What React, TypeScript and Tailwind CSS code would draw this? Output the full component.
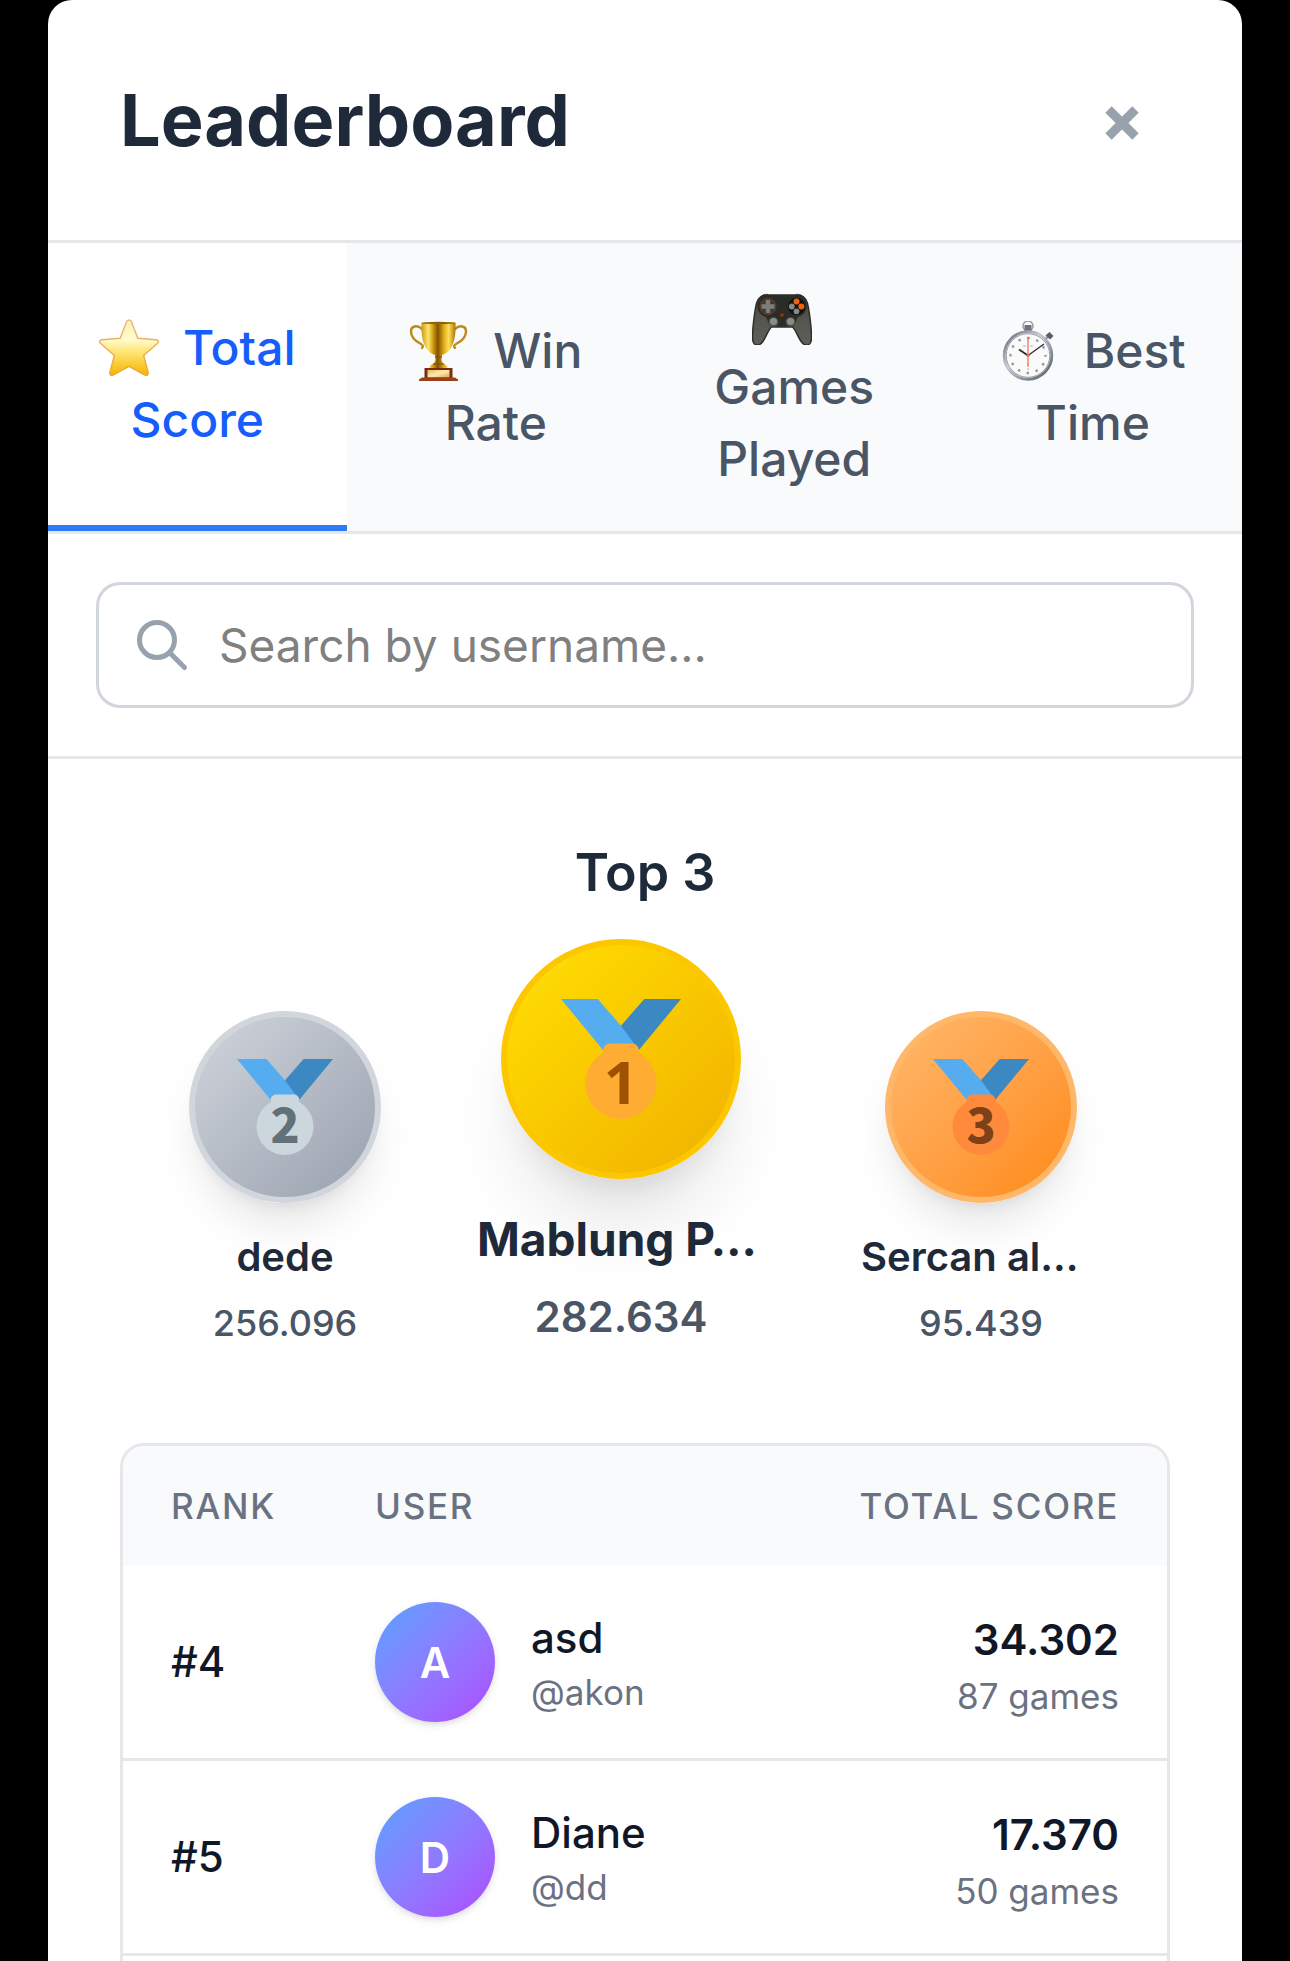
import React, { useState } from 'react';

type TabId = 'score' | 'winRate' | 'games' | 'time';

interface Tab {
  id: TabId;
  label: string;
  icon: React.FC;
}

interface PodiumEntry {
  place: 1 | 2 | 3;
  name: string;
  value: string;
}

interface Player {
  rank: number;
  name: string;
  username: string;
  score: string;
  games: number;
}

const StarIcon = () => (
  <svg viewBox="0 0 60 60" className="inline-block size-15 align-[-13px] mr-6" aria-hidden="true">
    <defs>
      <linearGradient id="star-fill" x1="0" y1="0" x2="0" y2="1">
        <stop offset="0" stopColor="#fff0b0" />
        <stop offset="0.35" stopColor="#fffbd0" />
        <stop offset="0.58" stopColor="#ffe473" />
        <stop offset="1" stopColor="#f7b500" />
      </linearGradient>
      <linearGradient id="star-edge" x1="0" y1="0" x2="0" y2="1">
        <stop offset="0" stopColor="#e6b877" />
        <stop offset="1" stopColor="#e9a92c" />
      </linearGradient>
    </defs>
    <path
      d="M27.600 3.500q2.400-3 4.800 0l6.400 16.800 18.400 1.500q3.400.8 1.400 3.600L44.600 37.500l4.600 17q.2 3.600-3.200 2.600L30 48.400l-16 8.700q-3.400 1-3.200-2.600l4.600-17L1.400 25.400q-2-2.800 1.400-3.600l18.400-1.500z"
      fill="url(#star-fill)"
      stroke="url(#star-edge)"
      strokeWidth="1.400"
    />
  </svg>
);

const TrophyIcon = () => (
  <svg viewBox="0 0 60 60" className="inline-block size-15 align-[-13px] mr-6" aria-hidden="true">
    <defs>
      <linearGradient id="trophy-cup" x1="0" y1="0" x2="1" y2="0">
        <stop offset="0" stopColor="#c79a12" />
        <stop offset="0.2" stopColor="#ffe56b" />
        <stop offset="0.36" stopColor="#c8920a" />
        <stop offset="0.48" stopColor="#805200" />
        <stop offset="0.66" stopColor="#e0ad1c" />
        <stop offset="0.8" stopColor="#ffdf5a" />
        <stop offset="1" stopColor="#a87404" />
      </linearGradient>
      <linearGradient id="trophy-plate" x1="0" y1="0" x2="1" y2="1">
        <stop offset="0" stopColor="#e8b95b" />
        <stop offset="0.5" stopColor="#ffeab0" />
        <stop offset="1" stopColor="#dfa848" />
      </linearGradient>
    </defs>
    <g fill="none" stroke="#b98a1c" strokeWidth="2.400" strokeLinecap="round">
      <path d="M13 8C8 3.500 2 5 2 10.500c0 6.500 5 10 10 12.500 2 1 2.500 2.500 1 4" />
      <path d="M46 8c5-4.500 11-3 11 2.500 0 6.500-5 10-10 12.500-2 1-2.500 2.500-1 4" />
    </g>
    <path
      d="M12.500 1.500h34c.5 12-1 22-6.500 28-3 3-5.500 4-7 4.500l-.5 5c.5 3 2 3.500 4.500 5 1 1 1.500 2 1.500 3.500h-18c0-1.500.5-2.500 1.500-3.500 2.500-1.500 4-2 4.500-5l-.5-5c-1.500-.5-4-1.500-7-4.500-5.500-6-7-16-6.500-28z"
      fill="url(#trophy-cup)"
    />
    <ellipse cx="29.500" cy="2" rx="17" ry="1.200" fill="#8f6207" />
    <path d="M26 36h7M24 43h11" stroke="#7a5203" strokeWidth="1.200" />
    <path d="M15.500 47h28v10h-28z" fill="#7a2d0c" />
    <path d="M18.500 49h22v7.500h-22z" fill="url(#trophy-plate)" />
    <path d="M13 56.500h33l3 2V60H10v-1.500z" fill="#98401a" />
  </svg>
);

const GamepadIcon = () => (
  <svg viewBox="0 0 60 60" className="inline-block size-15 align-[-13px] mr-6" aria-hidden="true">
    <defs>
      <linearGradient id="pad-body" x1="0" y1="0" x2="0" y2="1">
        <stop offset="0" stopColor="#43453f" />
        <stop offset="0.5" stopColor="#54564f" />
        <stop offset="1" stopColor="#5d5f58" />
      </linearGradient>
    </defs>
    <path d="M10 10.500l5-2 3 2zM50 10.500l-5-2-3 2z" fill="#8a8d84" />
    <path
      d="M12 10h36c5 1.500 7.500 6 8.500 13 1.500 9 3 20 3 30 0 8-6 9-10 4-3.500-4.500-5.500-12-9-15h-21c-3.500 3-5.500 10.500-9 15-4 5-10 4-10-4 0-10 1.500-21 3-30 1-7 3.500-11.500 8.500-13z"
      fill="url(#pad-body)"
      stroke="#2c2e2a"
      strokeWidth="1.500"
    />
    <path
      d="M13 10h34c6 2 9 9 7 15-1.500 4-5 6-8 7-2 4-3 9-7 9.500H21c-4-.5-5-5.500-7-9.500-3-1-6.500-3-8-7-2-6 1-13 7-15z"
      fill="#2a2c28"
    />
    <circle cx="16" cy="21.500" r="8" fill="#3a3c37" stroke="#7c3c1c" strokeWidth="0.900" />
    <path d="M13.800 15h4.400v4.300h4.300v4.400h-4.300V28h-4.400v-4.300H9.500v-4.400h4.300z" fill="#7d807a" />
    <circle cx="44.500" cy="21.500" r="8.500" fill="#11120f" />
    <circle cx="44.500" cy="16.500" r="3" fill="#f2600f" />
    <circle cx="49.300" cy="21.500" r="3" fill="#f2600f" />
    <circle cx="39.800" cy="21.500" r="2.900" fill="#85898a" />
    <circle cx="44.500" cy="26.300" r="2.900" fill="#85898a" />
    <circle cx="30" cy="30" r="1.900" fill="#8c3213" />
    <circle cx="21.500" cy="37" r="5" fill="#4a4d49" />
    <circle cx="21.500" cy="36.500" r="3.600" fill="#8a8d88" />
    <circle cx="38.500" cy="37" r="5" fill="#4a4d49" />
    <circle cx="38.500" cy="36.500" r="3.600" fill="#8a8d88" />
  </svg>
);

const StopwatchIcon = () => (
  <svg viewBox="0 0 60 60" className="inline-block size-15 align-[-13px] mr-6" aria-hidden="true">
    <defs>
      <linearGradient id="watch-rim" x1="0" y1="0" x2="1" y2="1">
        <stop offset="0" stopColor="#5c6470" />
        <stop offset="0.4" stopColor="#c5cad2" />
        <stop offset="0.7" stopColor="#8a919c" />
        <stop offset="1" stopColor="#4b525d" />
      </linearGradient>
    </defs>
    <circle cx="28" cy="5" r="5" fill="none" stroke="#9aa0aa" strokeWidth="1.600" />
    <path d="M24.500 4h7v6h-7z" fill="#6d747f" />
    <path d="M45.500 14.500l4-3.500 4 4-3.500 3.500z" fill="#565e69" />
    <path d="M43.500 20l4-4" stroke="#8a919c" strokeWidth="2.500" />
    <circle cx="28" cy="34.500" r="23.800" fill="#fafafa" stroke="url(#watch-rim)" strokeWidth="2.800" />
    <circle cx="28" cy="34.500" r="21.800" fill="none" stroke="#6a717c" strokeWidth="0.700" />
    <circle cx="28" cy="34.500" r="17.500" fill="none" stroke="#9b9b9b" strokeWidth="2.400" strokeDasharray="2.600 6.560" strokeDashoffset="1.300" />
    <path d="M23 25h3M30 25h3M27 43h2M27 48h2" stroke="#c9c9c9" strokeWidth="1.400" />
    <path d="M28 34.500l-9-6" stroke="#2b3036" strokeWidth="2" />
    <path d="M28 34.500L44 23" stroke="#2b3036" strokeWidth="1.300" />
    <path d="M28 16v30" stroke="#ee6a50" strokeWidth="1.200" />
    <circle cx="28" cy="34.500" r="1.600" fill="#ee6a50" />
  </svg>
);

const TABS: Tab[] = [
  { id: 'score', label: 'Total Score', icon: StarIcon },
  { id: 'winRate', label: 'Win Rate', icon: TrophyIcon },
  { id: 'games', label: 'Games Played', icon: GamepadIcon },
  { id: 'time', label: 'Best Time', icon: StopwatchIcon },
];

// second place on the left, winner in the middle
const PODIUM: PodiumEntry[] = [
  { place: 2, name: 'dede', value: '256.096' },
  { place: 1, name: 'Mablung P…', value: '282.634' },
  { place: 3, name: 'Sercan al…', value: '95.439' },
];

const PLAYERS: Player[] = [
  { rank: 4, name: 'asd', username: 'akon', score: '34.302', games: 87 },
  { rank: 5, name: 'Diane', username: 'dd', score: '17.370', games: 50 },
];

const PLACE_STYLE: Record<PodiumEntry['place'], { column: string; name: string; circle: string; disc: string; digit: string }> = {
  1: {
    column: 'w-72',
    name: 'text-left text-[46px] leading-18 font-bold',
    circle: 'border-yellow-400 from-yellow-300 to-yellow-500',
    disc: '#FFAC33',
    digit: '#9E5200',
  },
  2: {
    column: 'w-48',
    name: 'text-center text-[40px] leading-15 font-semibold',
    circle: 'border-gray-300 from-gray-300 to-gray-400',
    disc: '#CCD6DD',
    digit: '#627077',
  },
  3: {
    column: 'w-60',
    name: 'text-left text-[40px] leading-15 font-semibold',
    circle: 'border-orange-300 from-orange-300 to-orange-400',
    disc: '#FF8A3B',
    digit: '#7C4119',
  },
};

const Medal: React.FC<{ place: PodiumEntry['place'] }> = ({ place }) => {
  const { disc, digit } = PLACE_STYLE[place];

  return (
    <svg viewBox="0 0 36 36" className={place === 1 ? 'size-30' : 'size-24'}>
      <path fill="#55ACEE" d="M18 8l-7-8H0l14 17 11.521-4.750z" />
      <path fill="#3B88C3" d="M25 0l-7 8 5.390 7.312 1.227-1.489L36 0z" />
      <path
        fill={disc}
        d="M23.205 16.026c.08-.217.131-.448.131-.693 0-1.104-.896-2-2-2h-6.667c-1.104 0-2 .896-2 2 0 .245.05.476.131.693-3.258 1.826-5.464 5.307-5.464 9.307C7.336 31.224 12.111 36 18.003 36c5.891 0 10.667-4.776 10.667-10.667 0-4-2.206-7.481-5.465-9.307z"
      />
      <text
        x="18"
        y="31.400"
        textAnchor="middle"
        fill={digit}
        className={`text-[18px] ${
          place === 1 ? "font-['Noto_Sans',sans-serif] font-bold" : "font-['Noto_Sans_CJK_SC',sans-serif] font-black"
        }`}
      >
        {place}
      </text>
    </svg>
  );
};

const PodiumPlace: React.FC<{ entry: PodiumEntry }> = ({ entry }) => {
  const first = entry.place === 1;
  const style = PLACE_STYLE[entry.place];

  return (
    <div className={`flex flex-col items-center ${style.column}`}>
      <div
        className={`
          flex items-center justify-center rounded-full border-6 bg-linear-to-br mb-6
          ${style.circle}
          ${first
            ? 'size-60 shadow-[0_60px_75px_-15px_rgba(0,0,0,0.1),0_24px_30px_-18px_rgba(0,0,0,0.1)]'
            : 'size-48 shadow-[0_30px_45px_-9px_rgba(0,0,0,0.1),0_12px_18px_-12px_rgba(0,0,0,0.1)]'}
        `}
      >
        <Medal place={entry.place} />
      </div>
      <p className={`w-full whitespace-nowrap text-gray-800 ${style.name}`}>{entry.name}</p>
      <p
        className={`mt-3 text-gray-600 ${
          first ? 'text-[42px] leading-15 font-semibold' : 'text-[36px] leading-12 font-medium'
        }`}
      >
        {entry.value}
      </p>
    </div>
  );
};

const App: React.FC = () => {
  const [activeTab, setActiveTab] = useState<TabId>('score');
  const [query, setQuery] = useState('');

  const players = PLAYERS.filter((p) => p.username.includes(query.trim().toLowerCase()));

  return (
    <div className="h-screen overflow-hidden bg-black px-12 font-['Inter',sans-serif]">
      <div className="flex h-full flex-col overflow-hidden rounded-t-3xl bg-white">
        <header className="flex items-center justify-between border-b-3 border-gray-200 p-18">
          <h1 className="text-[72px] leading-24 font-bold text-gray-800">Leaderboard</h1>
          <button type="button" aria-label="Close" className="p-6 text-[#98a2ad]">
            <svg viewBox="0 0 48 48" className="size-12" stroke="currentColor" strokeWidth="9">
              <path d="M10.500 13.500l27 27M37.500 13.500l-27 27" />
            </svg>
          </button>
        </header>

        <nav className="flex border-b-3 border-gray-200">
          {TABS.map(({ id, label, icon: Icon }) => (
            <button
              key={id}
              type="button"
              onClick={() => setActiveTab(id)}
              className={`
                flex-1 basis-0 px-12 py-9 text-center text-[48px] leading-18 font-medium
                ${activeTab === id ? 'border-b-6 border-[#2f7bf3] bg-white text-blue-600' : 'bg-gray-50 text-gray-600'}
              `}
            >
              <Icon />
              {label}
            </button>
          ))}
        </nav>

        <div className="border-b-3 border-gray-200 p-12">
          <div className="relative">
            <svg
              viewBox="0 0 24 24"
              fill="none"
              stroke="currentColor"
              strokeWidth="2"
              strokeLinecap="round"
              strokeLinejoin="round"
              className="pointer-events-none absolute inset-y-0 left-9 my-auto size-15 text-[#98a2ad]"
            >
              <path d="M21 21l-6-6m2-5a7 7 0 11-14 0 7 7 0 0114 0z" />
            </svg>
            <input
              type="text"
              aria-label="Search by username"
              placeholder="Search by username..."
              value={query}
              onChange={(e) => setQuery(e.target.value)}
              className="block w-full rounded-3xl border-3 border-gray-300 py-6 pr-12 pl-30 text-[46px] leading-18 text-gray-900 placeholder:text-[#808080]"
            />
          </div>
        </div>

        <main className="flex flex-1 flex-col px-18 pt-18">
          <h2 className="mb-6 text-center text-[52px] leading-21 font-semibold text-gray-800">Top 3</h2>

          <div className="mb-24 flex items-end justify-center gap-24">
            {PODIUM.map((entry) => (
              <PodiumPlace key={entry.place} entry={entry} />
            ))}
          </div>

          <div className="flex-1 overflow-hidden rounded-t-3xl border-x-3 border-t-3 border-gray-200">
            <table className="w-full">
              <thead className="bg-gray-50 text-[35px] leading-12 tracking-wider text-gray-500 uppercase">
                <tr>
                  <th className="w-51 py-9 pl-12 text-left font-medium">Rank</th>
                  <th className="px-12 py-9 text-left font-medium">User</th>
                  <th className="px-12 py-9 text-right font-medium">Total Score</th>
                </tr>
              </thead>
              <tbody>
                {players.map((p) => (
                  <tr key={p.rank} className="border-b-3 border-gray-200">
                    <td className="py-9 pl-12 text-[42px] leading-15 font-medium text-gray-900">#{p.rank}</td>
                    <td className="px-12 py-9">
                      <div className="flex items-center gap-9">
                        <div className="flex size-30 items-center justify-center rounded-full bg-linear-to-br from-blue-400 to-purple-500 text-[42px] font-semibold text-white shadow-[0_3px_9px_rgba(0,0,0,0.1),0_3px_6px_-3px_rgba(0,0,0,0.1)]">
                          {p.name.charAt(0).toUpperCase()}
                        </div>
                        <div>
                          <div className="text-[42px] leading-15 font-medium text-gray-900">{p.name}</div>
                          <div className="text-[35px] leading-12 text-gray-500">@{p.username}</div>
                        </div>
                      </div>
                    </td>
                    <td className="px-12 text-right text-[48px] leading-17">
                      <span className="text-[42px] leading-15 font-semibold text-gray-900">{p.score}</span>
                      <div className="text-[35px] leading-12 text-gray-500">{p.games} games</div>
                    </td>
                  </tr>
                ))}
              </tbody>
            </table>
          </div>
        </main>
      </div>
    </div>
  );
};

export default App;
